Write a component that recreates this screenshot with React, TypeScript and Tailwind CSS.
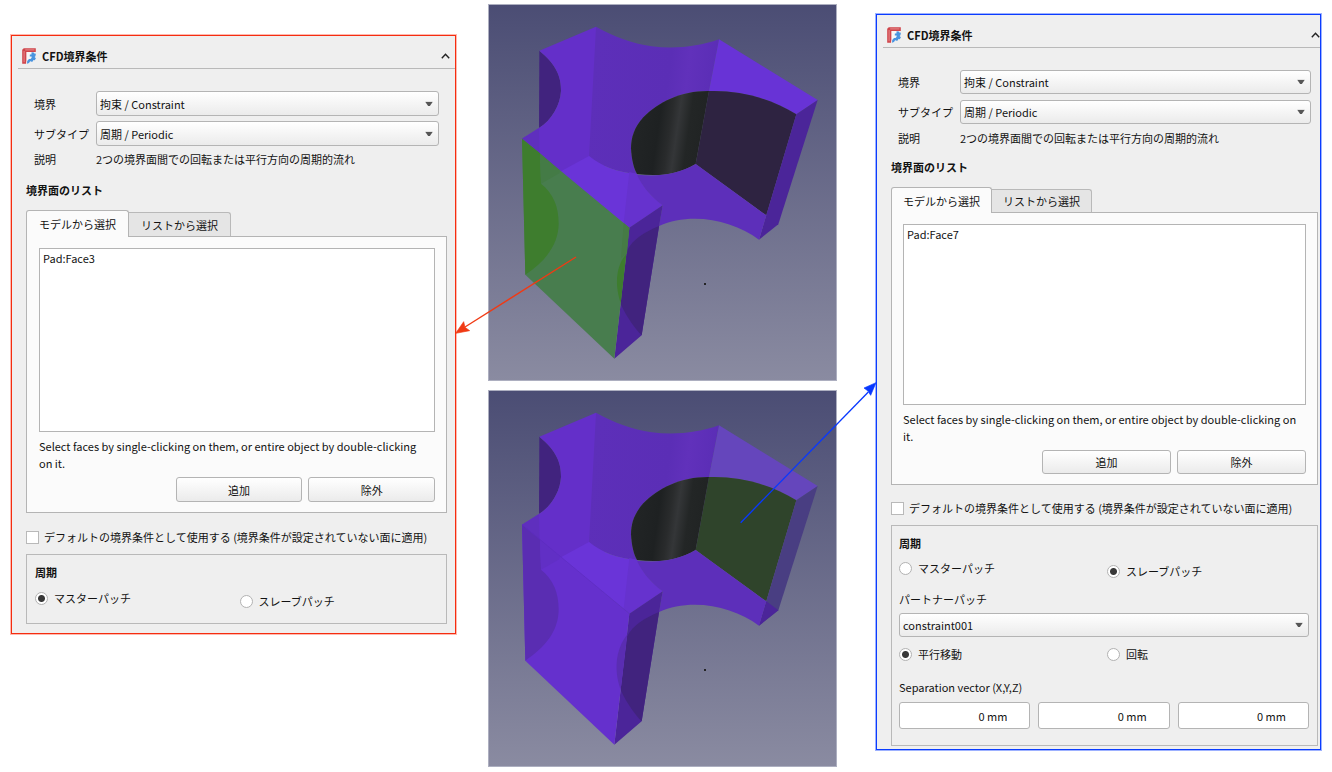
import React, { useId, useState } from "react";

const TOP_ARC = "C390,112 440,129 500,139 C570,148 640,140 702,118";
const NOTCH_ARC = "C215,195 228,230 228,272 C226,315 200,360 162,384";
const HOLE_LEFT = "C590,272 520,305 475,352 C448,382 438,412 438,445 C440,480 446,505 456,522";

function FreeCadIcon() {
  return (
    <svg viewBox="0 0 14 16" className="h-4 w-3.5 shrink-0" aria-hidden="true">
      <path d="M1.8 .2H13.8V4H4.9V12.6L4 15.8H.2V1.8Z" fill="#d0454b" />
      <path d="M3.2 1.9H12.4M2.1 3V14.2" stroke="#e58a8d" strokeWidth="1" fill="none" />
      <path d="M4.4 4H12V6.4H7.6V8H10V10.6H7.6V15H4.4Z" fill="#f7f7f7" />
      <path
        d="M9.6 4.2L11.8 4.4L12.3 5.6L13.9 5.8L13.4 8.2L12.6 8.9L13.9 10.2L12.8 12.2L11.4 12L10.8 13.6L9 13.8L8.3 13L7 15L5 15.8L5.2 13L7 10.9H8.6L9.6 9.8V8.4H7.8L7.9 6.4H9.4Z"
        fill="#4a94df"
      />
    </svg>
  );
}

function Chevron() {
  return (
    <svg viewBox="0 0 9 6" className="h-1.5 w-[9px]" aria-hidden="true">
      <path d="M.8 5.2L4.5 1.3L8.2 5.2" fill="none" stroke="#222" strokeWidth="1.4" />
    </svg>
  );
}

function ComboBox({ id, value, dense }: { id: string; value: string; dense?: boolean }) {
  return (
    <div className="relative">
      <select
        id={id}
        className={`block w-full appearance-none rounded-[3px] border border-[#b4b4b4] bg-linear-to-b from-white to-[#ebebeb] pl-[3px] pr-6 text-[11px] ${
          dense ? "h-6" : "h-[25px]"
        }`}
      >
        <option>{value}</option>
      </select>
      <svg
        viewBox="0 0 8 5"
        className="pointer-events-none absolute right-1.5 top-1/2 h-[5px] w-2 -translate-y-1/2"
        aria-hidden="true"
      >
        <path d="M.2 .3H7.8L4.9 4.4H3.1Z" fill="#565656" />
      </svg>
    </div>
  );
}

function Radio({
  name,
  label,
  checked,
  onSelect,
  low,
}: {
  name: string;
  label: string;
  checked: boolean;
  onSelect: () => void;
  low?: boolean;
}) {
  return (
    <label className={`flex h-[18px] items-center gap-1.5 ${low ? "self-end" : "self-start"}`}>
      <input
        type="radio"
        name={name}
        checked={checked}
        onChange={onSelect}
        className="size-[13px] appearance-none rounded-full border border-[#b2b2b2] bg-white checked:bg-[radial-gradient(circle,#383838_3px,#ffffff_4px)]"
      />
      {label}
    </label>
  );
}

type PanelProps = {
  tone: "red" | "blue";
  face: string;
  role: "master" | "slave";
  dense?: boolean;
  expanded?: boolean;
};

function BoundaryPanel({ tone, face, role, dense, expanded }: PanelProps) {
  const id = useId();
  const [patch, setPatch] = useState(role);
  const [motion, setMotion] = useState("translate");
  const tabPad = dense ? "px-[11px]" : "px-3";
  const buttonClass = `w-[32%] rounded-[3px] border border-[#b4b4b4] bg-linear-to-b from-white to-[#ebebeb] ${
    dense ? "h-6" : "h-[25px]"
  }`;

  return (
    <section
      className={`min-w-0 flex-1 border bg-[#efefef] ${
        tone === "red"
          ? "mt-[35px] border-[#f52d10] pb-[9px] shadow-[0_0_0_1px_#ff2d1055]"
          : "mt-3.5 border-[#0a3cff] pb-[3px] shadow-[0_0_0_1px_#0a3cff66]"
      }`}
    >
      <header
        className={`ml-1.5 flex h-[33px] items-center justify-between border-b border-[#b9b9b9] pl-1 pt-2 ${
          dense ? "" : "pr-[5px]"
        }`}
      >
        <h2 className="flex items-center gap-1.5 font-bold">
          <FreeCadIcon />
          CFD境界条件
        </h2>
        <button type="button" aria-label="折りたたむ">
          <Chevron />
        </button>
      </header>

      <div className={dense ? "ml-3.5 mr-0.5" : "ml-3.5 mr-2"}>
        <div
          className={`grid grid-cols-[62px_1fr] items-center pt-[22px] ${
            dense ? "gap-y-1.5 px-[7px]" : "gap-y-[5px] px-2"
          }`}
        >
          <label htmlFor={`${id}-boundary`}>境界</label>
          <ComboBox id={`${id}-boundary`} value="拘束 / Constraint" dense={dense} />
          <label htmlFor={`${id}-subtype`}>サブタイプ</label>
          <ComboBox id={`${id}-subtype`} value="周期 / Periodic" dense={dense} />
          <span className="leading-4">説明</span>
          <span className="whitespace-nowrap leading-4">
            2つの境界面間での回転または平行方向の周期的流れ
          </span>
        </div>

        <h3 className={dense ? "mt-3 font-bold" : "mt-3.5 font-bold"}>境界面のリスト</h3>

        <div className={dense ? "mt-[11px] flex items-end" : "mt-[11px] flex items-end"} role="tablist">
          <button
            type="button"
            role="tab"
            aria-selected="true"
            className={`relative z-10 -mb-px rounded-t-[3px] border border-b-0 border-[#b4b4b4] bg-[#fbfbfb] ${tabPad} ${
              dense ? "h-[26px]" : "h-[27px]"
            }`}
          >
            モデルから選択
          </button>
          <button
            type="button"
            role="tab"
            aria-selected="false"
            className={`-ml-px rounded-tr-[3px] border border-b-0 border-[#b9b9b9] bg-[#e5e5e5] ${tabPad} ${
              dense ? "h-[23px]" : "h-6"
            }`}
          >
            リストから選択
          </button>
        </div>

        <div
          className={`border border-[#b4b4b4] bg-[#fbfbfb] pb-2.5 pr-[11px] pt-[11px] ${
            dense ? "pl-[11px]" : "pl-3"
          }`}
        >
          <ul
            className={`border border-[#b4b4b4] bg-white px-[3px] ${dense ? "h-[181px]" : "h-[184px]"}`}
          >
            <li>{face}</li>
          </ul>
          <p className={`mt-1.5 leading-[17px] ${dense ? "" : "pr-1.5"}`}>
            Select faces by single-clicking on them, or entire object by double-clicking on it.
          </p>
          <div className="mt-[5px] flex justify-end gap-1.5">
            <button type="button" className={buttonClass}>
              追加
            </button>
            <button type="button" className={buttonClass}>
              除外
            </button>
          </div>
        </div>

        <label
          className={`flex h-[18px] items-center gap-[5px] whitespace-nowrap ${
            dense ? "mt-3.5" : "mt-[15px]"
          }`}
        >
          <input
            type="checkbox"
            className="size-[13px] shrink-0 appearance-none border border-[#b9b9b9] bg-white checked:bg-[#383838]"
          />
          デフォルトの境界条件として使用する (境界条件が設定されていない面に適用)
        </label>

        <fieldset
          className={`border border-[#b9b9b9] pt-2 ${
            dense ? "mt-2 pb-4 pl-[7px] pr-2" : "mt-2 px-2 pb-[13px]"
          }`}
        >
          <h3 className="font-bold">周期</h3>
          <div className={`grid h-[21px] grid-cols-2 gap-1.5 ${dense ? "mt-[7px]" : "mt-2"}`}>
            <Radio
              name={`${id}-patch`}
              label="マスターパッチ"
              checked={patch === "master"}
              onSelect={() => setPatch("master")}
            />
            <Radio
              name={`${id}-patch`}
              label="スレーブパッチ"
              checked={patch === "slave"}
              onSelect={() => setPatch("slave")}
              low
            />
          </div>
          {expanded && (
            <>
              <label htmlFor={`${id}-partner`} className="mb-[5px] mt-2.5 block">
                パートナーパッチ
              </label>
              <ComboBox id={`${id}-partner`} value="constraint001" dense={dense} />
              <div className="mt-2 grid grid-cols-2 gap-1.5">
                <Radio
                  name={`${id}-motion`}
                  label="平行移動"
                  checked={motion === "translate"}
                  onSelect={() => setMotion("translate")}
                />
                <Radio
                  name={`${id}-motion`}
                  label="回転"
                  checked={motion === "rotate"}
                  onSelect={() => setMotion("rotate")}
                />
              </div>
              <p className="mt-[15px]">Separation vector (X,Y,Z)</p>
              <div className="mt-1.5 grid grid-cols-3 gap-2">
                {["X", "Y", "Z"].map((axis) => (
                  <input
                    key={axis}
                    type="text"
                    aria-label={axis}
                    defaultValue="0 mm"
                    className="h-[27px] w-full min-w-0 rounded-[3px] border border-[#b4b4b4] bg-white pr-[22px] text-right"
                  />
                ))}
              </div>
            </>
          )}
        </fieldset>
      </div>
    </section>
  );
}

function ModelView({ selected }: { selected: "front" | "back" }) {
  const id = useId();
  const front = selected === "front";
  return (
    <svg
      viewBox="9 12 1047 1131"
      className="block w-full overflow-visible"
      role="img"
      aria-label={front ? "Pad:Face3" : "Pad:Face7"}
    >
      <defs>
        <linearGradient id={`${id}-sky`} x1="0" y1="0" x2="0" y2="1">
          <stop offset="0" stopColor="#4b4d74" />
          <stop offset="1" stopColor="#8a8ba1" />
        </linearGradient>
        <linearGradient id={`${id}-hole`} gradientUnits="userSpaceOnUse" x1="440" y1="380" x2="665" y2="412">
          <stop offset="0" stopColor="#222526" />
          <stop offset=".35" stopColor="#1e2122" />
          <stop offset=".5" stopColor="#292b2c" />
          <stop offset=".6" stopColor="#343638" />
          <stop offset=".75" stopColor="#232626" />
          <stop offset="1" stopColor="#202323" />
        </linearGradient>
        <linearGradient id={`${id}-wall`} gradientUnits="userSpaceOnUse" x1="320" y1="260" x2="690" y2="310">
          <stop offset="0" stopColor="#5d2fb9" />
          <stop offset=".6" stopColor="#5b2eb6" />
          <stop offset=".75" stopColor="#6131bb" />
          <stop offset="1" stopColor="#5a2db5" />
        </linearGradient>
      </defs>
      <rect x="10.5" y="13.5" width="1044" height="1128" fill={`url(#${id}-sky)`} stroke="#adafc0" strokeWidth="3" />

      <path d={`M163,152 ${NOTCH_ARC}Z`} fill="#41237e" />
      <path d="M163,152L333,80L360,520L225,515L111,416L162,384C200,360 226,315 228,272C228,230 215,195 163,152Z" fill="#642fc9" />
      <path d={`M333,80 ${TOP_ARC}L672,273 ${HOLE_LEFT}C400,518 350,500 312,468Z`} fill={`url(#${id}-wall)`} />
      <path d="M162,384L111,416L225,515L165,548Z" fill="#5f2fbe" />
      <path d="M225,515L312,468C350,500 400,518 456,522C475,565 500,590 533,616L433,683Z" fill="#6a34d8" />
      <path d="M433,516L456,522C475,565 500,590 533,616L433,683L416,669Z" fill="#6632ce" />
      <path d="M702,118L998,300L934,343C850,292 760,270 672,273Z" fill={front ? "#6833d6" : "#6546bc"} />
      <path d="M672,273C760,270 850,292 934,343L844,646L632,492Z" fill={front ? "#2e2341" : "#2f442b"} />
      <path d={`M672,273 ${HOLE_LEFT}C520,530 575,525 632,492Z`} fill={`url(#${id}-hole)`} />
      <path d="M998,300L934,343L822,719L880,673Z" fill={front ? "#4b2599" : "#493e82"} />
      {!front && <path d="M844,646L880,673L822,719Z" fill="#4b2599" />}
      <path
        d="M456,524C520,530 575,525 632,492L844,646L822,719C770,680 700,656 630,656C590,656 555,663 522,678L533,616C500,590 475,565 456,524Z"
        fill="#5d2fba"
      />

      <path d="M433,683L533,616L522,680L470,1006L388,1076Z" fill="#4b2599" />
      <path d="M522,678C480,697 445,715 427,750L407,912C430,960 450,985 470,1006Z" fill="#41237e" />
      <path d="M111,416L433,683L388,1076L121,824Z" fill={front ? "#487d4e" : "#6530cd"} />
      <path
        d="M111,416L165,460L168,551C205,580 221,620 221,670C221,735 180,785 121,824Z"
        fill={front ? "#3e7d2e" : "#5a2db2"}
      />
      <path d="M165,460L225,512L223,520L168,551Z" fill={front ? "#447b46" : "#612fc5"} />
      {front ? (
        <>
          <path d="M424,762C390,800 390,860 407,909Z" fill="#3e7d2e" />
          <path d="M416,669L433,683L426,760L408,775Z" fill="#467b45" />
        </>
      ) : (
        <path d="M427,745C388,795 388,860 407,912Z" fill="#5a2db2" />
      )}
      {!front && <path d="M111,416L433,683" fill="none" stroke="#5c2cbe" strokeWidth="2" />}
      <rect x="657" y="849" width="6" height="6" fill="#242426" />

      {front ? (
        <g fill="#f03a14" stroke="#f03a14">
          <path d="M273,771L-60,981" strokeWidth="4" />
          <path d="M-88,1000L-64,965L-60,982L-46,992Z" strokeWidth="2" />
        </g>
      ) : (
        <g fill="#0838ff" stroke="#0838ff">
          <path d="M767,410L1150,18" strokeWidth="4" />
          <path d="M1173,-10L1157,28L1149,15L1137,6Z" strokeWidth="2" />
        </g>
      )}
    </svg>
  );
}

export default function App() {
  return (
    <main
      lang="ja"
      className="flex min-h-screen items-start bg-white px-[11px] font-['Noto_Sans_CJK_JP',sans-serif] text-[11px] leading-[18px] text-[#121212]"
    >
      <BoundaryPanel tone="red" face="Pad:Face3" role="master" />
      <div className="relative z-10 ml-8 mr-[39px] mt-1 flex w-[349px] shrink-0 flex-col gap-[9px]">
        <ModelView selected="front" />
        <ModelView selected="back" />
      </div>
      <BoundaryPanel tone="blue" face="Pad:Face7" role="slave" dense expanded />
    </main>
  );
}
